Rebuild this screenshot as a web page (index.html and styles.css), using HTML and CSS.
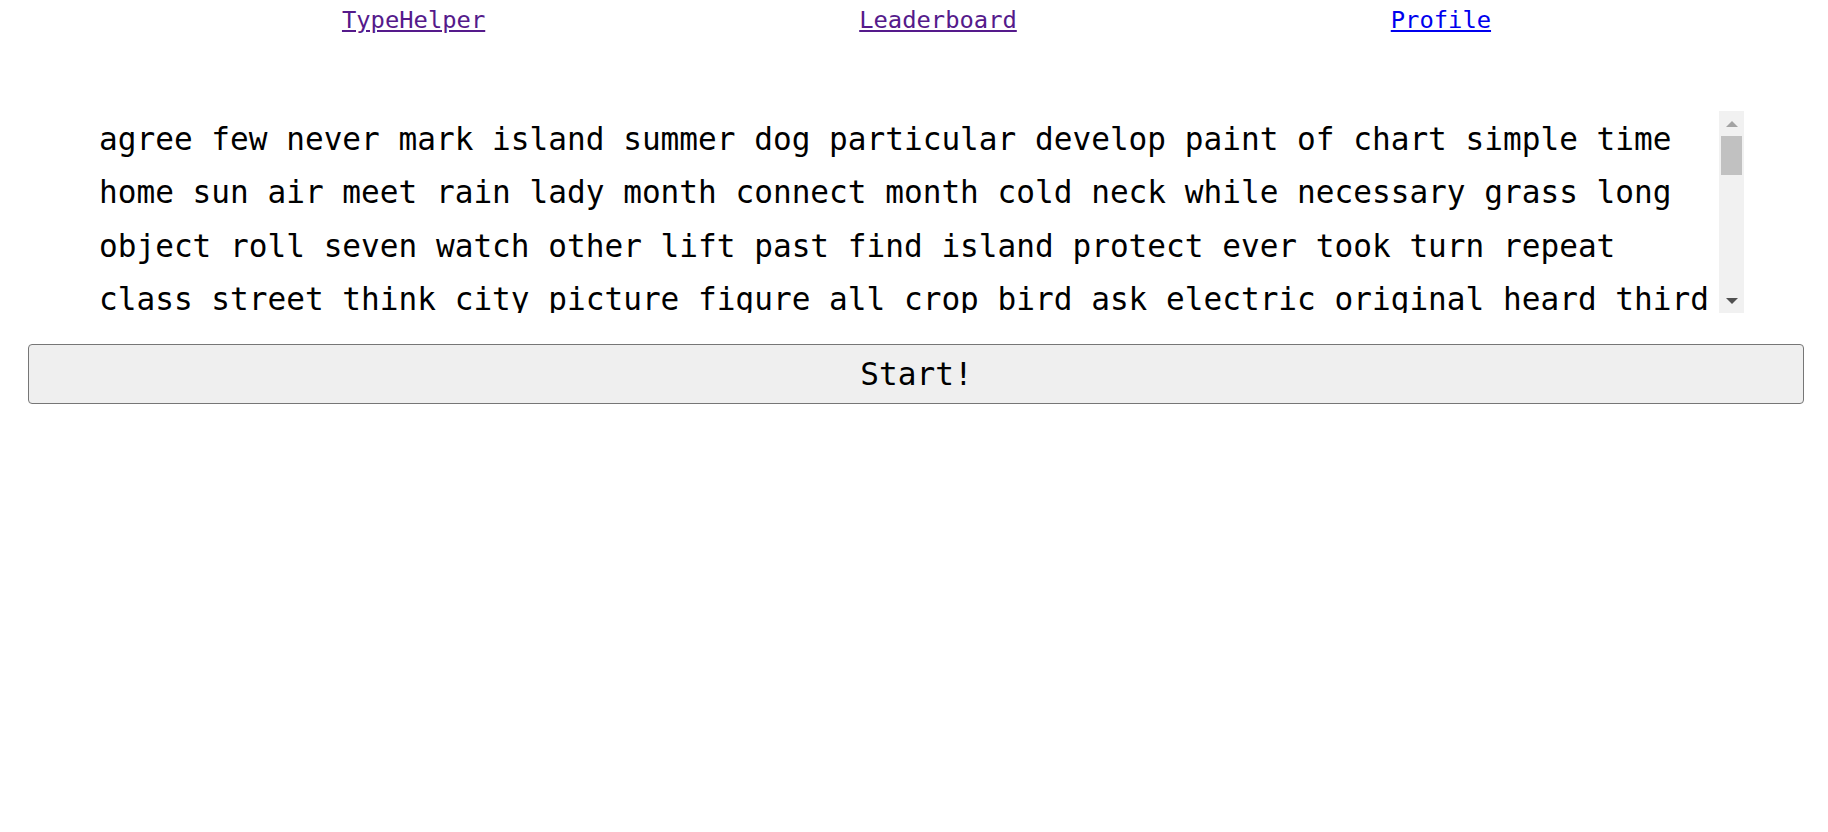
FILE: index.html
```html
<!DOCTYPE html>
<html lang="en">
<head>
<meta charset="utf-8">
<title>TypeHelper</title>
<link rel="stylesheet" href="styles.css">
</head>
<body>
<nav class="nav">
  <a class="nav-link visited" href="#">TypeHelper</a>
  <a class="nav-link visited" href="#">Leaderboard</a>
  <a class="nav-link" href="#">Profile</a>
</nav>
<main class="main">
  <div class="words-box">
    <div class="words">agree few never mark island summer dog particular develop paint of chart simple time home sun air meet rain lady month connect month cold neck while necessary grass long object roll seven watch other lift past find island protect ever took turn repeat class street think city picture figure all crop bird ask electric original heard third door surface line hold both wonder rest plane wait though car feet plan second book carry took science eat room friend began idea fish mountain stop once base hear horse cut sure watch color face wood main open seem together next white children begin got walk example ease paper group always music those both mark often letter until mile river car feet care second enough plain girl usual young ready above ever red list though feel talk bird soon body dog family direct pose leave song measure door product black short numeral class wind question happen complete ship area half rock order fire south problem piece told knew pass since top whole king space heard best hour better true during hundred five remember step early hold west ground interest reach fast verb sing listen six table travel less morning ten simple several vowel toward war lay against pattern slow center love person money serve appear road map rain rule govern pull cold notice voice unit</div>
    <div class="scrollbar" aria-hidden="true">
      <div class="sb-btn"><span class="arrow arrow-up"></span></div>
      <div class="sb-track"><div class="sb-thumb"></div></div>
      <div class="sb-btn"><span class="arrow arrow-down"></span></div>
    </div>
  </div>
  <button class="start" type="button">Start!</button>
</main>
</body>
</html>
```
FILE: styles.css
```css
html, body {
  margin: 0;
  padding: 0;
  background: #ffffff;
}

body {
  font-family: "DejaVu Sans Mono", "Liberation Mono", monospace;
  color: #000000;
}

.nav {
  display: flex;
  justify-content: space-evenly;
  padding: 6px 3px 0 8px;
  line-height: 28px;
}

.nav-link {
  font-size: 23.8px;
  padding: 0 40px;
  color: #0000ee;
  text-decoration: underline;
}

.nav-link.visited {
  color: #551a8b;
}

.main {
  display: flex;
  flex-direction: column;
  padding-top: 77px;
}

.words-box {
  display: flex;
  margin: 0 84px 0 99px;
  height: 202px;
}

.words {
  flex: 1;
  min-width: 0;
  overflow: hidden;
  padding-top: 2px;
  font-size: 31.1px;
  line-height: 53.3px;
  color: #000000;
}

.scrollbar {
  width: 25px;
  flex: none;
  display: flex;
  flex-direction: column;
  background: #f1f1f1;
}

.sb-btn {
  height: 25px;
  flex: none;
  display: flex;
  align-items: center;
  justify-content: center;
}

.arrow {
  width: 0;
  height: 0;
  border-left: 6px solid transparent;
  border-right: 6px solid transparent;
}

.arrow-up {
  border-bottom: 6px solid #a3a3a3;
}

.arrow-down {
  border-top: 6px solid #505050;
}

.sb-track {
  flex: 1;
  padding: 0 2px;
}

.sb-thumb {
  height: 39px;
  background: #c1c1c1;
}

.start {
  margin: 31px 24px 0 28px;
  height: 60px;
  font-family: "DejaVu Sans Mono", "Liberation Mono", monospace;
  font-size: 31.1px;
  color: #000000;
  background: #efefef;
  border: 1px solid #767676;
  border-radius: 4px;
  padding: 0 0 0 1px;
}
```
